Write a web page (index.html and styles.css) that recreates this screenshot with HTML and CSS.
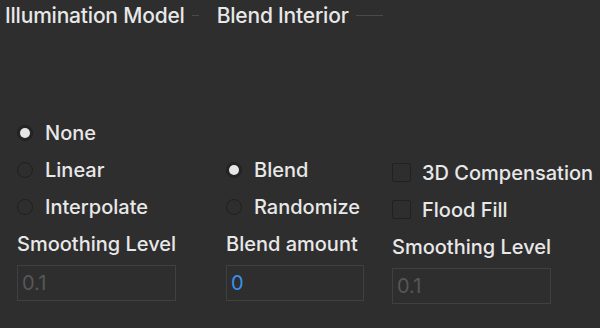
FILE: index.html
```html
<!DOCTYPE html>
<html lang="en">

<head>
    <meta charset="UTF-8">
    <meta name="viewport" content="width=device-width, initial-scale=1.0">
    <title>Illumination Model</title>
    <link rel="stylesheet" href="styles.css">
</head>

<body>

    <header class="tabs">
        <div class="group-title">
            <span>Illumination Model</span>
            <span class="rule short"></span>
        </div>
        <div class="group-title">
            <span>Blend Interior</span>
            <span class="rule long"></span>
        </div>
    </header>

    <main class="options">
        <div class="col">
            <label class="opt"><span class="radio checked"></span>None</label>
            <label class="opt"><span class="radio"></span>Linear</label>
            <label class="opt"><span class="radio"></span>Interpolate</label>
            <div class="field-label">Smoothing Level</div>
            <input class="field disabled" type="text" value="0.1" disabled>
        </div>

        <div class="col">
            <div class="opt"></div>
            <label class="opt"><span class="radio checked"></span>Blend</label>
            <label class="opt"><span class="radio"></span>Randomize</label>
            <div class="field-label">Blend amount</div>
            <input class="field active" type="text" value="0">
        </div>

        <div class="col shifted">
            <div class="opt"></div>
            <label class="opt"><span class="check"></span>3D Compensation</label>
            <label class="opt"><span class="check"></span>Flood Fill</label>
            <div class="field-label">Smoothing Level</div>
            <input class="field disabled" type="text" value="0.1" disabled>
        </div>
    </main>

</body>

</html>
```

FILE: styles.css
```css
body {
    margin: 0;
    padding: 0;
    background: #2e2e2e;
    color: #e8e8e8;
    font-family: Inter, "Open Sans", sans-serif;
    font-size: 20px;
    font-weight: 500;
    height: 328px;
    overflow: hidden;
}

.tabs {
    display: flex;
    padding: 2px 0 0 5px;
    height: 27px;
}

.group-title {
    display: flex;
    align-items: center;
    font-size: 21px;
    letter-spacing: -0.2px;
}

.rule {
    display: inline-block;
    height: 1px;
    background: #4a4a4a;
    margin-left: 7px;
}

.rule.short {
    width: 7px;
    margin-right: 18px;
}

.rule.long {
    width: 27px;
}

.options {
    display: grid;
    grid-template-columns: 209px 166px 1fr;
    padding: 85px 0 0 17px;
}

.col {
    display: flex;
    flex-direction: column;
}

.col.shifted {
    padding-top: 3px;
}

.opt {
    display: flex;
    align-items: center;
    height: 37px;
}

.radio {
    width: 14px;
    height: 14px;
    border: 1.5px solid #202020;
    border-radius: 50%;
    margin-right: 12px;
    position: relative;
    box-sizing: content-box;
}

.radio.checked {
    background: #262626;
}

.radio.checked::after {
    content: "";
    position: absolute;
    left: 2px;
    top: 2px;
    width: 10px;
    height: 10px;
    border-radius: 50%;
    background: #e6e6e6;
}

.check {
    width: 17px;
    height: 17px;
    border: 1.5px solid #212121;
    border-radius: 2px;
    margin-right: 11px;
}

.field-label {
    height: 40px;
    line-height: 38px;
}

.field {
    width: 159px;
    height: 36px;
    box-sizing: border-box;
    background: transparent;
    border: 1px solid #404040;
    padding: 0 4px;
    font-family: inherit;
    font-size: 20px;
    font-weight: 400;
    outline: none;
}

.field.disabled {
    color: #575757;
}

.field.active {
    width: 138px;
    color: #3a92ee;
}
```
